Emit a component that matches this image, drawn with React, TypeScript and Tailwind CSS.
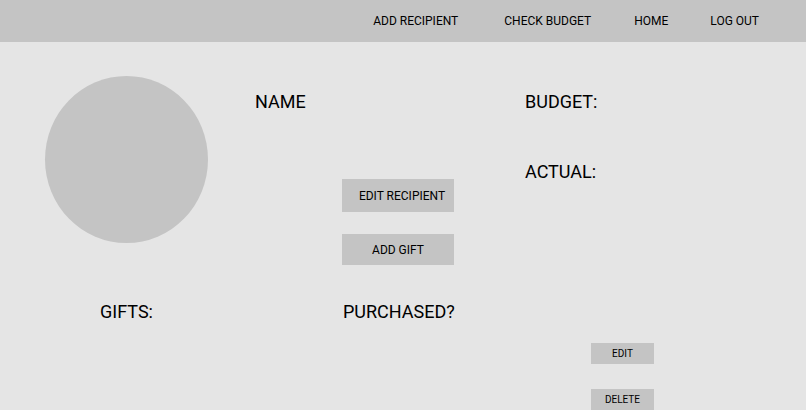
import React from "react";

export default function App() {
  return (
    <div
      className="w-[806px] h-[410px] bg-[#e5e5e5] overflow-hidden text-black"
      style={{ fontFamily: "Roboto, 'Liberation Sans', sans-serif" }}
    >
      <header className="h-[42px] bg-[#c4c4c4] flex items-center justify-end pr-[47px] text-[12px] leading-none pb-[1px]">
        <span>ADD RECIPIENT</span>
        <span className="ml-[46px]">CHECK BUDGET</span>
        <span className="ml-[43px]">HOME</span>
        <span className="ml-[42px]">LOG OUT</span>
      </header>

      <div className="flex pl-[45px] pt-[34px]">
        <div className="w-[163px] h-[167px] rounded-[50%] bg-[#c4c4c4] shrink-0" />
        <div className="ml-[47px] w-[270px] flex flex-col items-start">
          <div className="text-[18px] leading-none mt-[17px]">NAME</div>
          <button className="ml-[87px] mt-[68px] w-[112px] h-[33px] bg-[#c4c4c4] text-[12px] leading-none pl-[8px]">
            EDIT RECIPIENT
          </button>
          <button className="ml-[87px] mt-[22px] w-[112px] h-[31px] bg-[#c4c4c4] text-[12px] leading-none">
            ADD GIFT
          </button>
        </div>
        <div className="flex flex-col items-start">
          <div className="text-[18px] leading-none mt-[17px]">BUDGET:</div>
          <div className="text-[18px] leading-none mt-[52px]">ACTUAL:</div>
        </div>
      </div>

      <div className="flex mt-[38px] text-[18px] leading-none">
        <span className="pl-[100px] w-[343px]">GIFTS:</span>
        <span>PURCHASED?</span>
      </div>

      <div className="pl-[591px] mt-[22px] flex flex-col items-start gap-[25px]">
        <button className="w-[63px] h-[21px] bg-[#c4c4c4] text-[10px] leading-none">EDIT</button>
        <button className="w-[63px] h-[21px] bg-[#c4c4c4] text-[10px] leading-none">DELETE</button>
      </div>
    </div>
  );
}
